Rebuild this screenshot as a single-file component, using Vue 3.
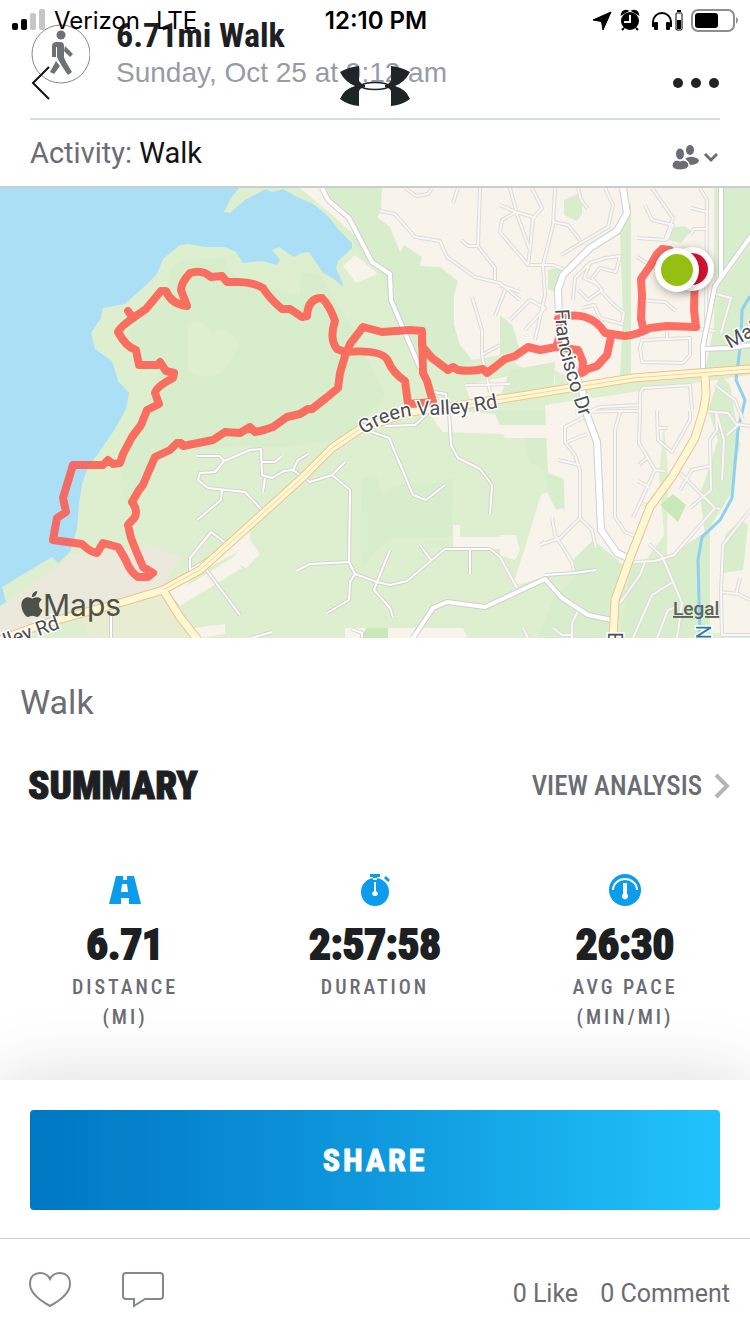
<template>
  <div class="page">
    <div class="top-bar">
      <div class="status">
        <div class="carrier">
          <svg class="signal" viewBox="0 0 34 22" aria-hidden="true">
            <rect x="0" y="14" width="6" height="7" rx="2" />
            <rect x="9" y="10" width="6" height="11" rx="2" />
            <rect x="18" y="4" width="6" height="17" rx="2" fill="#c6c6c6" />
            <rect x="27" y="0" width="6" height="21" rx="2" fill="#c6c6c6" />
          </svg>
          <span>Verizon</span>
          <span>LTE</span>
        </div>
        <strong class="clock">12:10 PM</strong>
        <svg class="status-icons" viewBox="0 0 148 24" aria-hidden="true">
          <path d="M1 12 19 4 11 22 9.500 13.500Z" stroke="#000" stroke-linejoin="round" />
          <circle cx="38" cy="13" r="9" />
          <path d="M30 6a4 4 0 0 1 5-3zM46 6a4 4 0 0 0-5-3zM32 20l-2 2M44 20l2 2" stroke="#000" stroke-width="2" />
          <path d="M38 7v7h-6" fill="none" stroke="#fff" stroke-width="2" />
          <path d="M61 19v-5a9 9 0 0 1 18 0v5" fill="none" stroke="#000" stroke-width="2" />
          <rect x="62" y="14" width="4" height="8" rx="1" />
          <rect x="74" y="14" width="4" height="8" rx="1" />
          <rect x="84" y="5" width="6" height="17" rx="1" fill="none" stroke="#000" />
          <rect x="85" y="2" width="4" height="2" />
          <rect x="85" y="12" width="4" height="9" />
          <rect x="100" y="2" width="42" height="21" rx="6" fill="none" stroke="#8e8e8e" stroke-width="2" />
          <rect x="103" y="5" width="23" height="15" rx="3" />
          <path d="M144 9q4 3 0 7z" fill="#8e8e8e" />
        </svg>
      </div>
      <nav class="nav">
        <button class="icon-btn back" aria-label="Back">
          <svg viewBox="0 0 20 36"><path d="M18 2 2 18 18 34" fill="none" stroke="#111315" stroke-width="2" /></svg>
        </button>
        <svg class="logo" viewBox="0 0 70 40" aria-hidden="true">
          <path d="M0 6Q9 1 19 0v15q2 3 6 4v2q-5 1-6 4v15Q8 39 0 33q4-10 15-13Q5 16 0 6z" />
          <path d="M70 6Q61 1 51 0v15q-2 3-6 4v2q5 1 6 4v15q11-1 19-7-4-10-15-13 10-4 15-14z" />
          <ellipse cx="35" cy="20" rx="14" ry="3.500" fill="none" stroke="#1f2427" stroke-width="1.500" />
        </svg>
        <button class="icon-btn more" aria-label="More">
          <svg viewBox="0 0 46 10"><circle cx="5" cy="5" r="5" /><circle cx="23" cy="5" r="5" /><circle cx="41" cy="5" r="5" /></svg>
        </button>
      </nav>
    </div>

    <header class="workout">
      <svg class="avatar" viewBox="0 0 60 60" aria-hidden="true">
        <circle cx="31" cy="30" r="29" fill="#fff" stroke="#85878b" />
        <circle cx="31" cy="11" r="4.500" />
        <path d="M22 33V22q0-4 5-4h3q4 0 4 4v11q0 2 8 15l-4 3q-8-11-11-18v-10h-1v10zM35 22l8 8-3 3-6-6zM26 37l4 5-6 8-4-2z" />
      </svg>
      <div>
        <h1>6.71mi Walk</h1>
        <p>Sunday, Oct 25 at 9:12 am</p>
      </div>
    </header>

    <div class="activity">
      <p>Activity: <b>Walk</b></p>
      <button class="icon-btn privacy" aria-label="Privacy">
        <svg viewBox="0 0 46 26">
          <ellipse cx="18" cy="6" rx="4" ry="5" />
          <path d="M13 15q4-3 8-2 6 1 6 4-2 4-9 4-2-5-5-6z" />
          <g stroke="#fff">
            <ellipse cx="8" cy="10" rx="4.500" ry="6" />
            <path d="M0 22q0-5 5-6 3 2 6 0 6 1 6 6-2 4-8 4-8 0-9-4z" />
          </g>
          <path d="m33 10 6 6 6-6" fill="none" stroke="#6a6d73" stroke-width="3" />
        </svg>
      </button>
    </div>

    <svg class="map" viewBox="0 188 750 450" role="img" aria-label="Route map">
      <rect y="188" width="750" height="450" fill="#deefd0" />
      <g v-for="(area, i) in areas" :key="i" :fill="area.fill">
        <path v-for="d in area.shapes" :key="d" :d="d" />
      </g>
      <path :d="waterway" fill="none" stroke="#8fd0f2" stroke-width="3" />

      <g fill="none" stroke-linejoin="round">
        <g v-for="kind in roadKinds" :key="kind.name">
          <path v-for="d in kind.roads" :key="'c' + d" :d="d" :stroke="kind.casing" :stroke-width="kind.width + 2" />
          <path v-for="d in kind.roads" :key="d" :d="d" :stroke="kind.color" :stroke-width="kind.width" />
        </g>
      </g>
      <path d="M163 590 200 570 250 525 302 478 332 448 360 429M470 404 583 386 633 378 750 369" fill="none" stroke="#f6d3a0" />

      <g class="route" opacity="0.850">
        <path v-for="d in route" :key="d" :d="d" />
      </g>

      <path id="valley" d="M364 435Q390 415 430 415T512 404" fill="none" />
      <path id="francisco" d="M555 309Q556 337 562 360T582 424" fill="none" />
      <g class="places">
        <text><textPath href="#valley">Green Valley Rd</textPath></text>
        <text><textPath href="#francisco">Francisco Dr</textPath></text>
        <text transform="translate(730 349) rotate(-29)">Mallard</text>
        <text transform="translate(6 648) rotate(-20)">lley Rd</text>
        <text transform="translate(608 632) rotate(90)">El Dorado</text>
        <text transform="translate(696 625) rotate(90)" fill="#287ca5">New York</text>
      </g>

      <circle cx="692" cy="269" r="22" class="pin" />
      <circle cx="692" cy="269" r="16" fill="#d8122f" />
      <circle cx="677" cy="270" r="22" class="pin" />
      <circle cx="677" cy="270" r="16" fill="#95bf12" />

      <g fill="#4d5148">
        <path transform="translate(19 591) scale(1.080)" d="M12.152 6.896c-.948 0-2.415-1.078-3.960-1.040-2.040.027-3.910 1.183-4.961 3.014-2.117 3.675-.546 9.103 1.519 12.090 1.013 1.454 2.208 3.090 3.792 3.039 1.520-.065 2.090-.987 3.935-.987 1.831 0 2.350.987 3.960.948 1.637-.026 2.676-1.480 3.676-2.948 1.156-1.688 1.636-3.325 1.662-3.415-.039-.013-3.182-1.221-3.220-4.857-.026-3.040 2.480-4.494 2.597-4.559-1.429-2.090-3.623-2.324-4.390-2.376-2-.156-3.675 1.090-4.610 1.090zM15.530 3.830c.843-1.012 1.400-2.427 1.245-3.830-1.207.052-2.662.805-3.532 1.818-.780.896-1.454 2.338-1.273 3.714 1.338.104 2.715-.688 3.559-1.701" />
        <text x="43" y="616" class="maps-name">Maps</text>
      </g>
      <a href="#legal"><text x="673" y="615" class="legal">Legal</text></a>
    </svg>

    <main>
      <p class="note">Walk</p>
      <div class="summary-head">
        <h2>SUMMARY</h2>
        <a href="#analysis">
          VIEW ANALYSIS
          <svg viewBox="0 0 16 26" aria-hidden="true"><path d="m2 2 11 11L2 24" fill="none" stroke="#b5b5b8" stroke-width="4" /></svg>
        </a>
      </div>
      <div class="stats">
        <div v-for="stat in stats" :key="stat.label" class="stat">
          <svg viewBox="0 0 32 32" aria-hidden="true">
            <path :d="stat.icon" fill="#0b9ceb" fill-rule="evenodd" />
            <path v-if="stat.lines" :d="stat.lines" fill="none" stroke="#fff" stroke-width="2" />
            <path v-if="stat.dot" :d="stat.dot" fill="#fff" />
          </svg>
          <strong>{{ stat.value }}</strong>
          <span>{{ stat.label }}</span>
          <span>{{ stat.unit }}</span>
        </div>
      </div>
    </main>

    <footer>
      <div class="share">
        <button>SHARE</button>
      </div>
      <div class="social">
        <button class="icon-btn" aria-label="Like">
          <svg viewBox="0 0 42 36"><path d="M21 34Q1 23 1 12C1 4 6 1 11 1q7 0 10 6 3-6 10-6c5 0 10 3 10 11Q41 23 21 34z" /></svg>
        </button>
        <button class="icon-btn" aria-label="Comment">
          <svg viewBox="0 0 42 36"><path d="M4 1h34q3 0 3 3v20q0 3-3 3H23l-11 7v-7H4q-3 0-3-3V4q0-3 3-3z" /></svg>
        </button>
        <p><span>0 Like</span><span>0 Comment</span></p>
      </div>
    </footer>
  </div>
</template>

<script setup>
const stats = [
  {
    value: '6.71',
    label: 'DISTANCE',
    unit: '(MI)',
    icon: 'M7 2h7v4h4V2h7l7 28H20v-6h-8v6H0zM13 10h5l1 8h-7z',
  },
  {
    value: '2:57:58',
    label: 'DURATION',
    unit: '',
    icon: 'M2 18a14 14 0 1 0 28 0 14 14 0 0 0-28 0zM11 0h10v3h-3v3h-4V3h-3zM25 4l2-2 4 4-2 2z',
    lines: 'M16 8v12',
    dot: 'M13 19a3 3 0 1 0 6 0l-3-3z',
  },
  {
    value: '26:30',
    label: 'AVG PACE',
    unit: '(MIN/MI)',
    icon: 'M0 16a16 16 0 1 0 32 0 16 16 0 0 0-32 0z',
    lines: 'M4 16a12 11 0 0 1 24 0',
    dot: 'M14 9h4v11a3 3 0 1 1-4 0z',
  },
]

const areas = [
  {
    fill: '#d7edcb',
    shapes: [
      'M170 270 180 261 225 258 229 272 250 284 300 295 302 272 320 275 350 325 365 355 385 395 345 440 280 447 245 445 200 450 165 450 150 475 128 505 122 490 120 470 150 400 160 370 135 355 130 330 165 295z',
      'M322 188h60l-1 24-4 3 13 10 8 23 4 2 2-5 18 12-2 9 20 1 18 14-4 14v30l6 20 12 15-20 10-40-15-25-60-6-25-20-15-20-35z',
      'M362 478l15-3 5 20 12-10 45-2 14-6-1 60-60 2-15 10-14 18-2-20z',
      'M480 410h70l4 28-1 32 18 4v42l-17-5-10-40-15-10-4-22-40-20z',
    ],
  },
  {
    fill: '#ddefcf',
    shapes: ['M188 325q12-10 24 8 18-10 28 12l-18 28q-22 8-34-2z'],
  },
  {
    fill: '#f8f4ec',
    shapes: [
      'M300 188h22l8 16 20 12 13 26-9-7-22-20zM343 266l12-11 23 19-22 9z',
      'M382 188h332v187l-130 10-40-20-20 3-24-13-28 5-12-15-6-20v-30l4-14-18-14-20-1 2-9-18-12-4 7-10-25-13-10 4-5z',
      'M465 385l35-7 45-10 10 8v8l-85 15z',
      'M545 405l205-30v258h-84l2-160-4-50-5 52 5 60-20 28-105 5-10-12 3-18 20 1 13-10-1-50-16-6-2-40z',
      'M430 415l25-4 40 3 5 11h55v13h-50l-2-4-60-2z',
      'M453 525h7v12h45l10 8-15 4h-47z',
      'M541 495l6-3 9 18 7-2 10 20v25l22 10-2 8-45 5-35 10z',
      'M500 535h16l4 15-5 10-15-5z',
      'M175 600 160 590 215 560 250 525 250 545 195 575z',
      'M250 540l10 14-14 14-16-8zM172 595l60-37 10 10-62 38zM195 628l30-4v10l-25 4z',
      'M345 638v-10h118l4 10z',
    ],
  },
  {
    fill: '#ebe9dc',
    shapes: ['M0 607 75 554 148 547 182 556 160 590 43 623 0 638z'],
  },
  {
    fill: '#e8edd1',
    shapes: ['M80 615 163 592 198 638H90z'],
  },
  {
    fill: '#d7edcb',
    shapes: [
      'M564 200l18-8 0 22-5 7-13-6zM548 270l15-4-6 27-9-4zM620 232l11-30v175h-11l3-60zM670 228l15-2 6 5-10 12-12-3z',
      'M724 188h26v45l-30 45zM723 282l27-35v123h-45zM500 315l12 10 8 25-20 5zM510 370l45-8-2 28-53 8z',
      'M573 560l20-20 25 20 8 10-16 46-6 32h-70l20-50 20-18z',
      'M632 562l40-8 38-25 0 109H620z',
      'M720 375l10 10 10 60-10 50-25 40-5-40 18-55-10-30z',
      'M725 535l15-15 8 5-5 45-20 3z',
    ],
  },
  {
    fill: '#c9e9b8',
    shapes: ['M673 494l13 11-8 17-18-17zM366 628h22v10h-26z'],
  },
  {
    fill: '#abdff5',
    shapes: [
      'M0 188h239l-8 10-7 14 6 1 15-13 21-11 6 3 11-3 14 8 16 7 15 12 10 13 14 14v5l-14 13-2 7 7 16-1 2-8-7-11-6-6-9-8-12-7 1-8 4-9-6-6-4-7 3 8 10-3 5-15-4-19 2-7-11-11-5h-20l-17-3-8 1-17 14-6 15-12 12-20 18-22 4-2 10-10 15 4 16 17 12 6 20 11 12-3 16-11 20-17 25-10 13-6 17-3 20-2 25-7 23-12 11-6-6-50 30 4 15-6 4z',
    ],
  },
]

const waterway = 'M750 296 742 310 741 340 736 380 745 400 738 430 732 498 720 520 702 537 698 560 700 638'

const roadKinds = [
  {
    name: 'street',
    width: 2,
    casing: '#dddbd9',
    color: '#f9f7f3',
    roads: [
      // north, left of Francisco Dr
      'M380 211 395 214 415 237 440 241 447 257 475 277 500 283 520 300',
      'M405 188 416 196 428 194 432 188M458 188 453 203M480 188 478 246 495 268 495 280M461 240 468 246 478 246',
      'M472 297 482 330 482 355 490 392M482 355 500 345M495 316 505 290M466 385 510 384',
      'M500 205 516 212 530 250 528 265 500 232 502 220 516 212 536 218M510 188 516 210M532 188 542 208 533 218 530 250M555 188 553 225 543 265 545 295 535 340',
      'M530 265 553 265 565 270M553 222 568 225 580 240M561 255 608 227 613 205 605 188M578 188 581 200 588 209M525 330 545 308 530 300 510 320M500 285 520 292',
      'M573 300 575 278 590 263 605 258 620 256 616 272 600 268 592 278 602 290 588 300 578 290M600 290 612 303 624 313 622 324 600 318 594 305 582 308M590 262 584 278 598 284',
      // around the start pin
      'M645 205 652 220 673 225 667 240M652 188 673 218 665 240 637 238M700 188 707 200 706 330M691 208 707 212M691 234 694 229 706 229M638 300 665 302 676 311',
      'M642 340 690 338 690 355 683 363 642 362 640 348zM667 328v10M690 328 715 331M716 294 731 298 721 333M637 257 655 268',
      // south of the highway
      'M588 415 565 427 565 442 575 455 580 470 580 518 560 538 540 545M580 518 592 530 596 548M558 460 580 465M567 442 587 434',
      'M552 518 555 535 572 562 574 573M540 545 545 542M575 412 620 411 640 411 639 443 655 470 633 518M639 465 648 457M620 412 615 430 615 517 625 532 637 537M655 470 665 471M638 481 649 487M642 503 648 506',
      'M657 411 658 440 672 452 690 420 690 411M657 428h11M640 393 643 388 690 385 692 410M640 411 640 393M590 411 600 407 640 405',
      'M716 411 717 430 710 440 711 490 690 508M711 466 692 470 680 490M680 473 715 508 674 555 655 561 633 562M716 411 724 440 722 480M704 411 728 413 736 424 750 426M717 508 720 509M727 435 738 425',
      'M649 544 662 556 682 603 677 638M645 562 640 575 620 603M673 582 652 595 633 638M678 606 668 610 657 638M578 611 572 623 572 638M553 628 562 635 572 635M523 628 528 638M500 557 517 588',
      'M750 510 723 545 721 592 738 594 750 600M736 594 740 578M721 592 722 635 750 635M715 385 735 400 743 420',
    ],
  },
  {
    name: 'lane',
    width: 2,
    casing: '#d0d3cd',
    color: '#ffffff',
    roads: [
      'M197 456 220 456 224 461 250 450 261 449 262 475 272 478 284 471 293 470 310 482 332 475 350 490 349 562 310 564 296 571M224 461 215 472 200 473 198 480 208 488 245 492 262 510M222 490 221 500 197 520M293 470 298 460 308 454M262 462 275 462 282 456M265 478 263 492M332 475 345 462',
      'M349 562 355 574 377 582 390 585 407 581 445 549 490 549 500 557M355 574 350 582 349 600 327 613M377 582 390 550M377 582 374 590 390 608 393 617M420 545 431 560M470 549V574',
      'M372 432 389 438 413 495 426 500 445 485M449 411 451 445 458 458 480 469 492 485 490 514M385 426 415 425 428 413M433 392 446 394 447 406',
      'M205 568 240 615M227 544 211 532 190 558 190 572M190 570 215 555M111 612v26M252 638 272 632M352 629 362 633V638M545 575 574 573 596 570',
    ],
  },
  {
    name: 'road',
    width: 4,
    casing: '#cfcfd0',
    color: '#ffffff',
    roads: [
      'M322 188 328 200 349 218 372 262 390 274 391 300 420 368',
      'M413 638 433 608 447 602 485 607 545 579 562 598 588 615 612 620',
    ],
  },
  {
    name: 'avenue',
    width: 6,
    casing: '#cfcfd0',
    color: '#ffffff',
    roads: [
      'M623 188 627 213 617 231 590 248 563 275 558 289 559 320 570 360 582 390 587 415 597 442 601 530 617 553 630 559',
    ],
  },
  {
    name: 'parkway',
    width: 4,
    casing: '#cfcfd0',
    color: '#ffffff',
    roads: ['M721 188V278M754 232 715 286 703 346V372M703 349 730 348 750 345'],
  },
  {
    name: 'highway',
    width: 7,
    casing: '#eec28e',
    color: '#fff8d2',
    roads: [
      'M0 640 43 624 123 602 163 590 200 570 250 525 302 478 332 448 360 429 410 412 470 404 583 386 633 378 750 369',
      'M163 590 180 617 198 640',
      'M705 374 706 395 703 412 695 438 672 477 650 507 630 558 615 600 613 640',
    ],
  },
]

const route = [
  'M695 275 694 310 696 327 667 326 650 328 Q637 335 625 336 L605 333 Q598 321 585 317 T558 319 L562 330 556 347 540 350 528 347 515 356 505 359 495 367 487 373 483 369 Q470 372 458 370 L453 367 448 370 432 358 422 346 422 331 410 330 382 332 363 327 350 344 345 356 340 373 338 388 326 398 312 409 308 409 300 414 287 417 273 427 264 430 255 432 250 427 240 433 225 432 213 440 183 446 181 443 177 443 170 450 155 457 148 473 143 485 139 490 132 502 Q138 510 135 517 L128 525 131 538 137 553 143 567 153 573 148 577 138 577 Q131 572 128 565 T118 547 L103 543 97 553 Q90 552 82 544 L53 540 57 518 66 512 63 498 73 465 103 465 108 460 113 464 120 463 123 454 132 437 141 425 147 410 159 404 155 393 Q156 387 173 378 L174 373 166 371 160 362 158 365 139 365 136 350 Q126 347 118 332 Q119 328 133 318 L146 309 161 291 166 291 Q171 304 187 306 L181 290 Q181 283 190 273 Q202 269 211 277 L222 276 227 282 238 282 Q253 282 263 288 Q269 298 282 309 L290 309 302 317 307 316 Q308 298 322 298 Q330 306 335 321 Q329 339 337 349 L345 352 Q383 349 388 361 T405 381 L408 404 433 402 427 381 423 373 422 331',
  'M128 311 133 318M556 347 578 350 583 362 582 373 588 369 597 366 607 355 611 337',
  'M643 327 641 319 642 296 641 279 650 266 657 254 662 249 670 250',
]
</script>

<style>
body {
  margin: 0;
  background: #fff;
}
</style>

<style scoped>
.page {
  position: relative;
  display: flex;
  flex-direction: column;
  min-height: 100vh;
  font-family: Roboto, 'Liberation Sans', sans-serif;
  color: #1d2023;
}

h1,
h2,
p {
  margin: 0;
}

button {
  padding: 0;
  border: none;
  background: none;
  cursor: pointer;
}

svg {
  display: block;
}

.top-bar {
  position: absolute;
  inset: 0 0 auto;
}

.status {
  display: grid;
  grid-template-columns: 1fr auto 1fr;
  align-items: center;
  height: 40px;
  padding: 0 10px 0 12px;
  font-family: Inter, sans-serif;
  font-size: 24px;
  color: #000;
}

.carrier {
  display: flex;
  align-items: center;
  gap: 16px;
}

.signal {
  width: 34px;
  margin-right: -8px;
}

.clock {
  font-weight: 600;
}

.status-icons {
  width: 148px;
  justify-self: end;
}

.nav {
  display: grid;
  grid-template-columns: 1fr auto 1fr;
  align-items: center;
  height: 86px;
  padding: 0 31px;
}

.back svg {
  width: 20px;
}

.logo {
  width: 70px;
  margin-top: 6px;
  fill: #1f2427;
}

.more {
  justify-self: end;
}

.more svg {
  width: 46px;
  fill: #1f2427;
}

.workout {
  display: flex;
  gap: 26px;
  height: 102px;
  margin: 0 30px;
  padding-top: 16px;
  border-bottom: 2px solid #d3dde1;
}

.avatar {
  width: 60px;
  height: 60px;
  margin-top: 8px;
  fill: #6d7077;
}

h1 {
  font-family: 'Roboto Condensed', Roboto, sans-serif;
  font-size: 34px;
  line-height: 38px;
}

.workout p {
  font-family: 'Liberation Sans', sans-serif;
  font-size: 28px;
  line-height: 38px;
  color: #979ba6;
}

.activity {
  display: flex;
  align-items: center;
  justify-content: space-between;
  height: 66px;
  padding: 0 32px 0 30px;
  border-bottom: 2px solid #c9ccd1;
  font-size: 29px;
  color: #6a6d73;
}

.activity b {
  font-weight: 400;
  color: #111315;
}

.privacy {
  padding-top: 8px;
}

.privacy svg {
  width: 46px;
  fill: #6a6d73;
}

.map {
  width: 100%;
  height: auto;
}

.route path {
  fill: none;
  stroke: #ff584d;
  stroke-width: 8;
  stroke-linecap: round;
  stroke-linejoin: round;
}

.places {
  font-size: 20px;
  fill: #4b4e52;
  stroke: #fff;
  stroke-width: 3px;
  paint-order: stroke;
}

.pin {
  fill: #fff;
  filter: drop-shadow(0 2px 4px rgba(0, 0, 0, 0.3));
}

.maps-name {
  font-family: Inter, sans-serif;
  font-size: 30px;
}

.legal {
  font-size: 19px;
  font-weight: 500;
  fill: #5d635c;
  text-decoration: underline;
}

.note {
  padding: 44px 20px;
  font-size: 34px;
  line-height: 40px;
  color: #6a6d73;
}

.summary-head {
  display: flex;
  align-items: center;
  justify-content: space-between;
  height: 40px;
  padding: 0 20px 0 28px;
}

h2 {
  font-family: 'Roboto Condensed', Roboto, sans-serif;
  font-size: 39px;
  font-weight: 900;
  -webkit-text-stroke: 1px #1d2023;
}

.summary-head a {
  display: flex;
  align-items: center;
  gap: 12px;
  font-family: 'Roboto Condensed', Roboto, sans-serif;
  font-size: 27px;
  font-weight: 500;
  color: #6a6d73;
  text-decoration: none;
}

.summary-head svg {
  width: 16px;
}

.stats {
  display: grid;
  grid-template-columns: repeat(3, 1fr);
  padding: 68px 0 48px;
}

.stat {
  display: flex;
  flex-direction: column;
  align-items: center;
}

.stat svg {
  width: 32px;
}

.stat strong {
  margin: 14px 0 4px;
  font-family: 'Roboto Condensed', Roboto, sans-serif;
  font-size: 43px;
  line-height: 48px;
  -webkit-text-stroke: 2px #1d2023;
}

.stat span {
  font-family: 'Roboto Condensed', Roboto, sans-serif;
  font-size: 20px;
  font-weight: 500;
  line-height: 30px;
  letter-spacing: 3px;
  color: #6a6d73;
}

footer {
  position: sticky;
  bottom: 0;
  margin-top: auto;
  background: #fff;
  box-shadow: 0 0 70px rgba(0, 0, 0, 0.15);
}

.share {
  padding: 30px 30px 28px;
  border-bottom: 1px solid #d0d1d3;
}

.share button {
  width: 100%;
  height: 100px;
  border-radius: 4px;
  background: linear-gradient(90deg, #0077c2, #0f98dd 50%, #21c3fb);
  font-family: 'Roboto Condensed', Roboto, sans-serif;
  font-size: 32px;
  font-weight: 700;
  letter-spacing: 3px;
  color: #fff;
  -webkit-text-stroke: 1px #fff;
}

.social {
  display: flex;
  align-items: center;
  gap: 51px;
  height: 95px;
  padding: 6px 20px 0 29px;
  box-sizing: border-box;
}

.social svg {
  width: 42px;
  fill: none;
  stroke: #858891;
  stroke-width: 2;
}

.social p {
  display: flex;
  gap: 22px;
  margin-left: auto;
  padding-top: 8px;
  font-size: 25px;
  color: #6a6d73;
}
</style>
